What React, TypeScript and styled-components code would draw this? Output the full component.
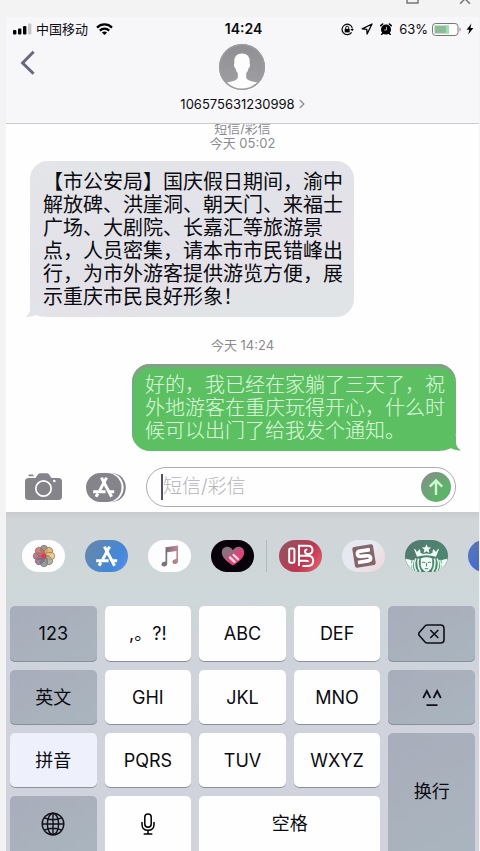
import React from "react";
import styled, { createGlobalStyle, css } from "styled-components";

const GlobalStyle = createGlobalStyle`
  *, *::before, *::after { box-sizing: border-box; }
  body {
    margin: 0;
    background: #f3f3f4;
    font-family: Inter, "Noto Sans CJK SC", sans-serif;
    color: #0b0b10;
  }
  button, input { font: inherit; color: inherit; }
  svg { display: block; flex: none; }
`;

const Page = styled.div`
  display: flex;
  flex-direction: column;
  height: 100vh;
  overflow: hidden;
`;

const PlainButton = styled.button`
  display: flex;
  align-items: center;
  justify-content: center;
  padding: 0;
  border: 0;
  background: none;
`;

const TitleBar = styled.div`
  display: flex;
  flex: none;
  justify-content: flex-end;
  align-items: flex-start;
  gap: 40px;
  height: 17px;
  padding-right: 9px;
`;

const Phone = styled.main`
  display: flex;
  flex: 1;
  flex-direction: column;
  margin: 0 1px 0 6px;
  background: #fefefe;
`;

const Header = styled.header`
  position: relative;
  z-index: 1;
  background: #f7f7f9;
  border-bottom: 1px solid #c9cbcd;
`;

const StatusBar = styled.div`
  display: grid;
  grid-template-columns: 1fr auto 1fr;
  align-items: center;
  height: 24px;
  padding: 0 5px 0 7px;
  font-size: 13px;
  line-height: 16px;
`;

const StatusGroup = styled.div<{ $end?: boolean }>`
  display: flex;
  align-items: center;
  justify-content: ${(p) => (p.$end ? "flex-end" : "flex-start")};
  gap: ${(p) => (p.$end ? 7 : 4)}px;
  white-space: nowrap;
`;

const Carrier = styled.span`
  margin-right: 4px;
`;

const Clock = styled.time`
  font-size: 14px;
  font-weight: 600;
`;

const Power = styled.span`
  display: flex;
  align-items: center;
  gap: 4px;
`;

const ContactBar = styled.div`
  display: grid;
  grid-template-columns: 1fr auto 1fr;
  align-items: start;
  padding: 3px 14px 9px;
`;

const BackButton = styled(PlainButton)`
  justify-self: start;
  margin-top: 6px;
`;

const Contact = styled(PlainButton)`
  flex-direction: column;
  gap: 4px;
`;

const ContactName = styled.span`
  display: flex;
  align-items: center;
  gap: 4px;
  font-size: 13px;
  line-height: 20px;
`;

const Thread = styled.section`
  display: flex;
  flex-direction: column;
  margin-top: -3px;
`;

const Stamp = styled.p`
  margin: 0;
  text-align: center;
  font-size: 13px;
  line-height: 15px;
  color: #8b8b90;
`;

const Bubble = styled.div<{ $mine?: boolean }>`
  position: relative;
  max-width: 324px;
  padding: 10px 10px 8px 13px;
  border-radius: 18px;
  font-size: 20px;
  line-height: 23px;
  ${(p) =>
    p.$mine
      ? css`
          align-self: flex-end;
          margin: 11px 23px 0 24px;
          color: #dcfddc;
          font-weight: 300;
          background: #5cc063;
          box-shadow: inset 1px 3px 3px #8b9a8d;
        `
      : css`
          align-self: flex-start;
          margin: 10px 24px 21px;
          background: linear-gradient(165deg, #e4e5e8 0%, #e2e2e9 45%, #e5e1e8 65%, #e0e4e7 85%);
        `}
`;

const Tail = styled.svg<{ $mine?: boolean }>`
  position: absolute;
  bottom: 0;
  ${(p) => (p.$mine ? "right: -5px;" : "left: -4px;")}
`;

const Composer = styled.form`
  display: flex;
  align-items: center;
  padding: 16px 23px 5px 19px;
`;

const ComposerTool = styled(PlainButton)`
  margin-right: 24px;
  & + & { margin-right: 20px; }
`;

const Field = styled.div`
  display: flex;
  flex: 1;
  align-items: center;
  min-width: 0;
  height: 40px;
  padding: 0 4px 0 14px;
  border: 1px solid #aeaab0;
  border-radius: 20px;
`;

const Caret = styled.span`
  flex: none;
  width: 2px;
  height: 26px;
  background: #50506a;
`;

const MessageInput = styled.input`
  flex: 1;
  min-width: 0;
  padding: 0;
  border: 0;
  outline: 0;
  background: none;
  font-size: 19px;
  line-height: 26px;
  font-weight: 300;
  &::placeholder { color: #b3b3b8; opacity: 1; }
`;

const Keyboard = styled.section`
  flex: 1;
  background: linear-gradient(#c9cccd 0, #d0d5d8 8px, #ced7d9 84px, #cfd3dc 150px, #d1d2dc 100%);
`;

const AppStrip = styled.nav`
  display: flex;
  gap: 20px;
  padding: 28px 0 34px 16px;
  overflow: hidden;
`;

const AppButton = styled(PlainButton)<{ $tint: string }>`
  flex: none;
  width: 43px;
  height: 32px;
  border-radius: 16px;
  overflow: hidden;
  background: ${(p) => p.$tint};
`;

const StripDivider = styled.span`
  flex: none;
  width: 1px;
  height: 32px;
  margin: 0 -8px;
  background: #b2b9c3;
`;

const Keys = styled.div`
  display: grid;
  grid-template-columns: repeat(5, 1fr);
  grid-template-rows: 56px repeat(3, 55px);
  gap: 8px;
  padding: 0 4px;
`;

const tones = {
  light: "#fefeff",
  dark: "linear-gradient(150deg, #a9adbb, #a9b5be)",
  active: "#eef1fc",
};

const Key = styled(PlainButton)<{
  $tone: keyof typeof tones;
  $cols?: number;
  $rows?: number;
  $flush?: boolean;
}>`
  grid-column: span ${(p) => p.$cols ?? 1};
  grid-row: span ${(p) => p.$rows ?? 1};
  border-radius: ${(p) => (p.$flush ? "5px 5px 0 0" : "5px")};
  background: ${(p) => tones[p.$tone]};
  box-shadow: inset 0 -1px 0 ${(p) => (p.$flush ? "transparent" : "#8c8f98")};
  font-size: 18px;
  line-height: 24px;
`;

const SignalIcon = () => (
  <svg width="19" height="12" viewBox="0 0 19 12" aria-hidden="true">
    <rect x="0" y="7" width="3.4" height="4.5" rx="1" />
    <rect x="5" y="5.5" width="3.4" height="6" rx="1" />
    <rect x="10" y="3" width="3.4" height="8.5" rx="1" />
    <rect x="15" y="0.5" width="3.4" height="11" rx="1" fill="#c5c5c8" />
  </svg>
);

const WifiIcon = () => (
  <svg width="17" height="12" viewBox="0 0 17 12" fill="none" stroke="#000" strokeWidth="2.2" aria-hidden="true">
    <path d="M1 4.600C5.200.4 11.800.4 16 4.600" />
    <path d="M3.800 7.600c2.700-2.600 6.700-2.600 9.400 0" />
    <path d="M5.900 9.600c1.500-1.400 3.700-1.400 5.200 0L8.500 12z" fill="#000" stroke="none" />
  </svg>
);

const LockIcon = () => (
  <svg width="13" height="13" viewBox="0 0 13 13" fill="none" stroke="#000" strokeWidth="1.200" aria-hidden="true">
    <path d="M10.600 9.300A5.200 5.200 0 1 1 11.400 5.500" />
    <path d="M9.400 6h3.500l-1.700 2.300z" fill="#000" stroke="none" />
    <rect x="3.700" y="5.900" width="5" height="3.500" fill="#000" stroke="none" />
    <path d="M4.700 6V4.700a1.500 1.500 0 0 1 3 0V6" strokeWidth="1" />
  </svg>
);

const LocationIcon = () => (
  <svg width="12" height="12" viewBox="0 0 12 12" fill="none" stroke="#000" strokeWidth="1.300" strokeLinejoin="round" aria-hidden="true">
    <path d="M11 1 1.200 5.800l4.600.5.300 4.700z" />
  </svg>
);

const AlarmIcon = () => (
  <svg width="12" height="12" viewBox="0 0 12 12" aria-hidden="true">
    <circle cx="6" cy="6.600" r="5" />
    <path d="M.8 2.600 2.600 1M11.200 2.600 9.400 1" stroke="#000" strokeWidth="1.600" strokeLinecap="round" />
    <path d="M2.500 10.500l-.8 1M9.500 10.500l.8 1" stroke="#000" strokeWidth="1.400" strokeLinecap="round" />
    <path d="M6.500 3.800V7H4.200" fill="none" stroke="#d8d8d8" strokeWidth=".8" />
  </svg>
);

const BatteryIcon = () => (
  <svg width="30" height="13" viewBox="0 0 30 13" aria-hidden="true">
    <rect x=".5" y=".5" width="25.500" height="12" rx="3" fill="#fdfdfd" stroke="#77777b" />
    <path d="M2.500 2.500h14.500v8H2.500z" fill="#90bb9b" />
    <path d="M14 2.500h3v8h-3z" fill="#9be2aa" />
    <path d="M27.600 4.500c1.400.5 1.400 3.500 0 4z" fill="#77777b" />
  </svg>
);

const BoltIcon = () => (
  <svg width="8" height="12" viewBox="0 0 8 12" aria-hidden="true">
    <path d="M5.400.4.600 6.800h2.800L2.200 11.600 7.400 4.900H4.400z" />
  </svg>
);

const BackIcon = () => (
  <svg width="16" height="26" viewBox="0 0 16 26" fill="none" stroke="#686780" strokeWidth="3" aria-hidden="true">
    <path d="M13.600 1.800 2.600 13l11 10.800" />
  </svg>
);

const Avatar = () => (
  <svg width="46" height="46" viewBox="0 0 46 46" aria-hidden="true">
    <defs>
      <linearGradient id="avatar" x1="0" y1="0" x2="0" y2="1">
        <stop offset="0" stopColor="#8f8f93" />
        <stop offset="1" stopColor="#a0a0a5" />
      </linearGradient>
    </defs>
    <circle cx="23" cy="23" r="23" fill="url(#avatar)" />
    <path
      d="M23 9.500c-5 0-7.900 3.200-7.700 8 .1 1.300.1 2-.3 2.800-.3 1.600.4 3.300 1.500 4 .3 2.300 1.300 3.800 2.300 4.800v4.200c0 1.500-1.200 2.400-3 3.100-2.800 1.100-6.300 1.500-8.600 2.200A21.500 21.500 0 0 0 38.800 38.600c-2.300-.7-5.800-1.100-8.600-2.200-1.800-.7-3-1.600-3-3.100v-4.200c1-1 2-2.500 2.300-4.800 1.100-.7 1.800-2.400 1.500-4-.4-.8-.4-1.500-.3-2.800.2-4.800-2.700-8-7.700-8z"
      fill="#fdfdfd"
    />
    <circle cx="23" cy="23" r="22.200" fill="none" stroke="#9b9ba0" strokeWidth="1.600" />
  </svg>
);

const ChevronIcon = () => (
  <svg width="6" height="10" viewBox="0 0 6 10" fill="none" stroke="#909095" strokeWidth="1.400" aria-hidden="true">
    <path d="m.8 1 4 4-4 4" />
  </svg>
);

const CameraIcon = () => (
  <svg width="37" height="28" viewBox="0 0 37 28" aria-hidden="true">
    <path d="M3.500 5h7l2.600-3.800Q14 .2 15.200.2h6.600q1.200 0 2.100 1L26.500 5h7Q37 5 37 8.500v15q0 3.500-3.500 3.500h-30Q0 27 0 23.500v-15Q0 5 3.500 5z" fill="#85848b" />
    <rect x="3.500" y="1.500" width="5" height="1.800" rx=".9" fill="#85848b" />
    <circle cx="18.500" cy="15.500" r="7.700" fill="none" stroke="#fff" strokeWidth="1.700" />
    <circle cx="29.300" cy="8" r="1.300" fill="#fff" />
  </svg>
);

const StoreStrokes = () => (
  <g fill="none" stroke="#fff" strokeWidth="3">
    <path d="M15.400 4.600 25.600 23.800" />
    <path d="M20.600 4.600 13.600 17.600" />
    <path d="M11.900 20.600 10 23.800" />
    <path d="M7.200 18.700h12.400M22.600 18.700h5.600" />
  </g>
);

const StoreToolIcon = () => (
  <svg width="40" height="29" viewBox="0 0 40 29" aria-hidden="true">
    <path d="M26 .2c8 0 13.800 6 13.800 14.300S34 28.800 26 28.800z" fill="#85848b" />
    <path d="M14.500 0h9C31.500 0 37.600 6 37.600 14.500S31.500 29 23.500 29h-9z" fill="#fff" />
    <rect width="35.500" height="29" rx="14.500" fill="#85848b" />
    <StoreStrokes />
  </svg>
);

const SendIcon = () => (
  <svg width="30" height="30" viewBox="0 0 30 30" aria-hidden="true">
    <defs>
      <linearGradient id="send" x1="0" y1="0" x2="1" y2="1">
        <stop offset=".2" stopColor="#7f9583" />
        <stop offset=".7" stopColor="#5cb369" />
      </linearGradient>
    </defs>
    <circle cx="15" cy="15" r="15" fill="url(#send)" />
    <path d="M15 23V9M8.800 14.600 15 8.400l6.200 6.200" fill="none" stroke="#c9fbcf" strokeWidth="2.400" />
  </svg>
);

const petals = ["#8f8580", "#e5a95c", "#e9c779", "#a7a58c", "#7f8f8f", "#876f8b", "#a66780", "#c27069"];

const PhotosIcon = () => (
  <svg width="24" height="24" viewBox="-12 -12 24 24" aria-hidden="true">
    {petals.map((fill, i) => (
      <rect key={fill} x="-3.500" y="-10.800" width="7" height="9.800" rx="3.500" fill={fill} fillOpacity=".85" stroke="#77666b" strokeWidth=".6" transform={`rotate(${i * 45})`} />
    ))}
    <circle r="2.600" fill="#d33f5a" />
  </svg>
);

const StoreIcon = () => (
  <svg width="36" height="29" viewBox="0 0 36 29" aria-hidden="true">
    <StoreStrokes />
  </svg>
);

const MusicIcon = () => (
  <svg width="18" height="22" viewBox="0 0 18 22" aria-hidden="true">
    <defs>
      <linearGradient id="music" x1="0" y1="0" x2="1" y2="0">
        <stop offset=".3" stopColor="#77737b" />
        <stop offset="1" stopColor="#c78594" />
      </linearGradient>
    </defs>
    <path d="M4.500 2.200 17 .4V16q0 2.800-3 3-2.600 0-2.600-2.200 0-2 2.600-2.500l1.400-.3V6L6.200 7.300V18.500q0 2.700-3 2.900-2.700 0-2.700-2.200 0-2.100 2.700-2.500l1.300-.3z" fill="url(#music)" />
  </svg>
);

const HeartIcon = () => (
  <svg width="24" height="20" viewBox="0 0 24 20" aria-hidden="true">
    <defs>
      <linearGradient id="heart" x1="0" y1="0" x2="1" y2="1">
        <stop offset=".25" stopColor="#88727d" />
        <stop offset=".7" stopColor="#ed3b78" />
      </linearGradient>
    </defs>
    <path d="M12 19.500C5 15 .8 11 .8 6.400.8 3 3.200.8 6.300.8c2.400 0 4.500 1.300 5.700 3.400C13.200 2.100 15.300.8 17.700.8c3.100 0 5.500 2.200 5.500 5.600C23.200 11 19 15 12 19.500z" fill="url(#heart)" />
    <path d="m9 11.500 4.600 4.300M12.600 9l4.400 4.200" stroke="#ffd7e2" strokeWidth="2.400" strokeLinecap="round" />
  </svg>
);

const SingIcon = () => (
  <svg width="28" height="24" viewBox="0 0 28 24" fill="none" stroke="#fff" strokeWidth="2" aria-hidden="true">
    <rect x="2.200" y="4.400" width="5.200" height="14.400" rx="1.400" />
    <path d="M12 22V1.800h8.500q5 0 5 4.200 0 4-4.300 4-3.200 0-3.200-2.500 0-2 2.300-2" />
    <path d="M12 11.800h8.800q5.400 0 5.400 5 0 5.200-5.400 5.200H15.500M12 16.800h7.200q1.800 0 1.800 1.200" />
  </svg>
);

const SogouIcon = () => (
  <svg width="28" height="26" viewBox="0 0 28 26" aria-hidden="true">
    <g transform="rotate(-9 14 13)">
      <rect x="3.500" y="2.500" width="21" height="21" rx="2" fill="#84656b" />
      <path d="M20.800 7.600H11q-3.200 0-3.200 2.600 0 2.500 3.200 2.700l6 .4q3.200.2 3.200 2.600 0 2.500-3.200 2.500H7" fill="none" stroke="#fff" strokeWidth="3.600" />
    </g>
  </svg>
);

const SirenIcon = () => (
  <svg width="43" height="32" viewBox="0 0 43 32" aria-hidden="true">
    <g fill="#eefaf4">
      <path d="m21.500 4.200 1.300 3.100 3.400.3-2.600 2.200.8 3.300-2.900-1.800-2.900 1.800.8-3.300-2.600-2.200 3.400-.3z" />
      <path d="M8.800 8.500q2.200 1 3.200 3.400l2.600-2.800q1 1.700.9 3.600l2.400 1.200q3.600-.8 7.200 0l2.400-1.200q-.1-1.900.9-3.600l2.600 2.800q1-2.400 3.200-3.400l-3.200 8.300q-9.500-3-19 0z" />
      <path d="M15.800 18.500q5.700-2.300 11.400 0v7.500q-1.300 4-5.700 6-4.400-2-5.700-6z" />
      <path d="M.5 18.800q4.600.2 7 2.200l-1.800.9 2 3-2 .6 1.500 4Q1.500 25 .5 18.800zM42.500 18.800q-4.600.2-7 2.200l1.800.9-2 3 2 .6-1.500 4q5.700-4.500 6.700-10.700z" />
    </g>
    <g fill="none" stroke="#d9f2e6" strokeWidth="1.700">
      <path d="M13.600 18.500q-1.800 7 2 13.500M10.800 18.500q-3 7 1 13.500M8.400 20q-2.600 6 .2 11" />
      <path d="M29.400 18.500q1.800 7-2 13.500M32.200 18.500q3 7-1 13.500M34.600 20q2.600 6-.2 11" />
    </g>
    <g fill="none" stroke="#4d8370" strokeWidth="1">
      <path d="M17 22.600q1.700-.9 3.200 0M22.800 22.600q1.700-.9 3.200 0M21.500 23v3.500M19.800 28.700h3.400" />
    </g>
  </svg>
);

const DeleteIcon = () => (
  <svg width="27" height="20" viewBox="0 0 27 20" fill="none" stroke="#101018" strokeWidth="1.600" strokeLinejoin="round" aria-hidden="true">
    <path d="M9.300 1H22.500q3.500 0 3.500 3.500v11q0 3.500-3.500 3.500H9.300Q8 19 7 18L1.300 11.500q-1.300-1.500 0-3L7 2Q8 1 9.300 1z" />
    <path d="m12.300 6 8 8M20.300 6l-8 8" />
  </svg>
);

const FaceIcon = () => (
  <svg width="20" height="18" viewBox="0 0 20 18" fill="none" stroke="#101018" strokeWidth="1.800" aria-hidden="true">
    <path d="M1.200 9 4.800 2l3.600 7M11.600 9l3.600-7 3.600 7M4.500 16.200h11" />
  </svg>
);

const GlobeIcon = () => (
  <svg width="24" height="24" viewBox="0 0 24 24" fill="none" stroke="#101018" strokeWidth="1.400" aria-hidden="true">
    <circle cx="12" cy="12" r="10.800" />
    <ellipse cx="12" cy="12" rx="5.600" ry="10.800" />
    <path d="M12 1.200v21.600M1.200 12h21.600M3.300 5.900q8.700 3.600 17.400 0M3.300 18.100q8.700-3.600 17.400 0" />
  </svg>
);

const MicIcon = () => (
  <svg width="14" height="22" viewBox="0 0 14 22" fill="none" stroke="#000" strokeWidth="1.500" strokeLinecap="round" aria-hidden="true">
    <rect x="3.800" y=".9" width="6.400" height="13.400" rx="3.200" />
    <path d="M1 9.500v2q0 5.800 6 5.800t6-5.800v-2M7 17.500V21M3.200 21h7.600" />
  </svg>
);

type KeySpec = {
  name: string;
  icon?: React.ReactNode;
  tone?: keyof typeof tones;
  cols?: number;
  rows?: number;
  flush?: boolean;
};

const keys: KeySpec[] = [
  { name: "123", tone: "dark" },
  { name: ",。?!" },
  { name: "ABC" },
  { name: "DEF" },
  { name: "删除", icon: <DeleteIcon />, tone: "dark" },
  { name: "英文", tone: "dark" },
  { name: "GHI" },
  { name: "JKL" },
  { name: "MNO" },
  { name: "颜文字", icon: <FaceIcon />, tone: "dark" },
  { name: "拼音", tone: "active" },
  { name: "PQRS" },
  { name: "TUV" },
  { name: "WXYZ" },
  { name: "换行", tone: "dark", rows: 2, flush: true },
  { name: "切换键盘", icon: <GlobeIcon />, tone: "dark", flush: true },
  { name: "听写", icon: <MicIcon />, flush: true },
  { name: "空格", cols: 2, flush: true },
];

const systemApps = [
  { name: "照片", tint: "#fdfdfe", icon: <PhotosIcon /> },
  { name: "App Store", tint: "linear-gradient(120deg, #6b87a3, #4388d8 70%, #5d8ff5)", icon: <StoreIcon /> },
  { name: "音乐", tint: "#fdfdfe", icon: <MusicIcon /> },
  { name: "Digital Touch", tint: "#08020a", icon: <HeartIcon /> },
];

const otherApps = [
  { name: "唱吧", tint: "linear-gradient(125deg, #8c5864, #be3651 60%, #ee6673)", icon: <SingIcon /> },
  { name: "搜狗", tint: "linear-gradient(135deg, #e6e9f0 50%, #f3d5d5)", icon: <SogouIcon /> },
  { name: "星巴克", tint: "linear-gradient(120deg, #55776d, #4a8a72)", icon: <SirenIcon /> },
  { name: "更多", tint: "linear-gradient(120deg, #6178a5, #436cd6 40%)", icon: null },
];

export default function App() {
  return (
    <Page>
      <GlobalStyle />
      <TitleBar>
        <PlainButton type="button" aria-label="最大化">
          <svg width="13" height="4" viewBox="0 0 13 4" fill="none" stroke="#77777a" strokeWidth="1.500">
            <path d="M1 0v3h11V0" />
          </svg>
        </PlainButton>
        <PlainButton type="button" aria-label="关闭">
          <svg width="12" height="4" viewBox="0 0 12 4" fill="none" stroke="#77777a" strokeWidth="1.500">
            <path d="M1 3.800 6-1.200l5 5" />
          </svg>
        </PlainButton>
      </TitleBar>
      <Phone>
        <Header>
          <StatusBar>
            <StatusGroup>
              <SignalIcon />
              <Carrier>中国移动</Carrier>
              <WifiIcon />
            </StatusGroup>
            <Clock>14:24</Clock>
            <StatusGroup $end>
              <LockIcon />
              <LocationIcon />
              <AlarmIcon />
              <Power>
                63%
                <BatteryIcon />
                <BoltIcon />
              </Power>
            </StatusGroup>
          </StatusBar>
          <ContactBar>
            <BackButton type="button" aria-label="返回">
              <BackIcon />
            </BackButton>
            <Contact type="button">
              <Avatar />
              <ContactName>
                106575631230998
                <ChevronIcon />
              </ContactName>
            </Contact>
          </ContactBar>
        </Header>
        <Thread>
          <Stamp>短信/彩信</Stamp>
          <Stamp>今天 05:02</Stamp>
          <Bubble>
            【市公安局】国庆假日期间，渝中解放碑、洪崖洞、朝天门、来福士广场、大剧院、长嘉汇等旅游景点，人员密集，请本市市民错峰出行，为市外游客提供游览方便，展示重庆市民良好形象！
            <Tail width="16" height="14" viewBox="0 0 16 14" aria-hidden="true">
              <path d="M4 0v6q0 5-4 7.500 5 1 10-1.500l6 2V0z" fill="#e1e4e8" />
            </Tail>
          </Bubble>
          <Stamp>今天 14:24</Stamp>
          <Bubble $mine>
            好的，我已经在家躺了三天了，祝外地游客在重庆玩得开心，什么时候可以出门了给我发个通知。
            <Tail $mine width="18" height="15" viewBox="0 0 18 15" aria-hidden="true">
              <path d="M13 0v7q.5 5 5 7.300-5 .7-10-2L0 15 8 0z" fill="#5cc063" />
            </Tail>
          </Bubble>
        </Thread>
        <Composer onSubmit={(e) => e.preventDefault()}>
          <ComposerTool type="button" aria-label="相机">
            <CameraIcon />
          </ComposerTool>
          <ComposerTool type="button" aria-label="应用">
            <StoreToolIcon />
          </ComposerTool>
          <Field>
            <Caret />
            <MessageInput type="text" aria-label="短信/彩信" placeholder="短信/彩信" />
            <PlainButton type="submit" aria-label="发送">
              <SendIcon />
            </PlainButton>
          </Field>
        </Composer>
        <Keyboard>
          <AppStrip aria-label="应用">
            {systemApps.map((app) => (
              <AppButton key={app.name} type="button" aria-label={app.name} $tint={app.tint}>
                {app.icon}
              </AppButton>
            ))}
            <StripDivider />
            {otherApps.map((app) => (
              <AppButton key={app.name} type="button" aria-label={app.name} $tint={app.tint}>
                {app.icon}
              </AppButton>
            ))}
          </AppStrip>
          <Keys>
            {keys.map((k) => (
              <Key
                key={k.name}
                type="button"
                aria-label={k.name}
                $tone={k.tone ?? "light"}
                $cols={k.cols}
                $rows={k.rows}
                $flush={k.flush}
              >
                {k.icon ?? k.name}
              </Key>
            ))}
          </Keys>
        </Keyboard>
      </Phone>
    </Page>
  );
}
